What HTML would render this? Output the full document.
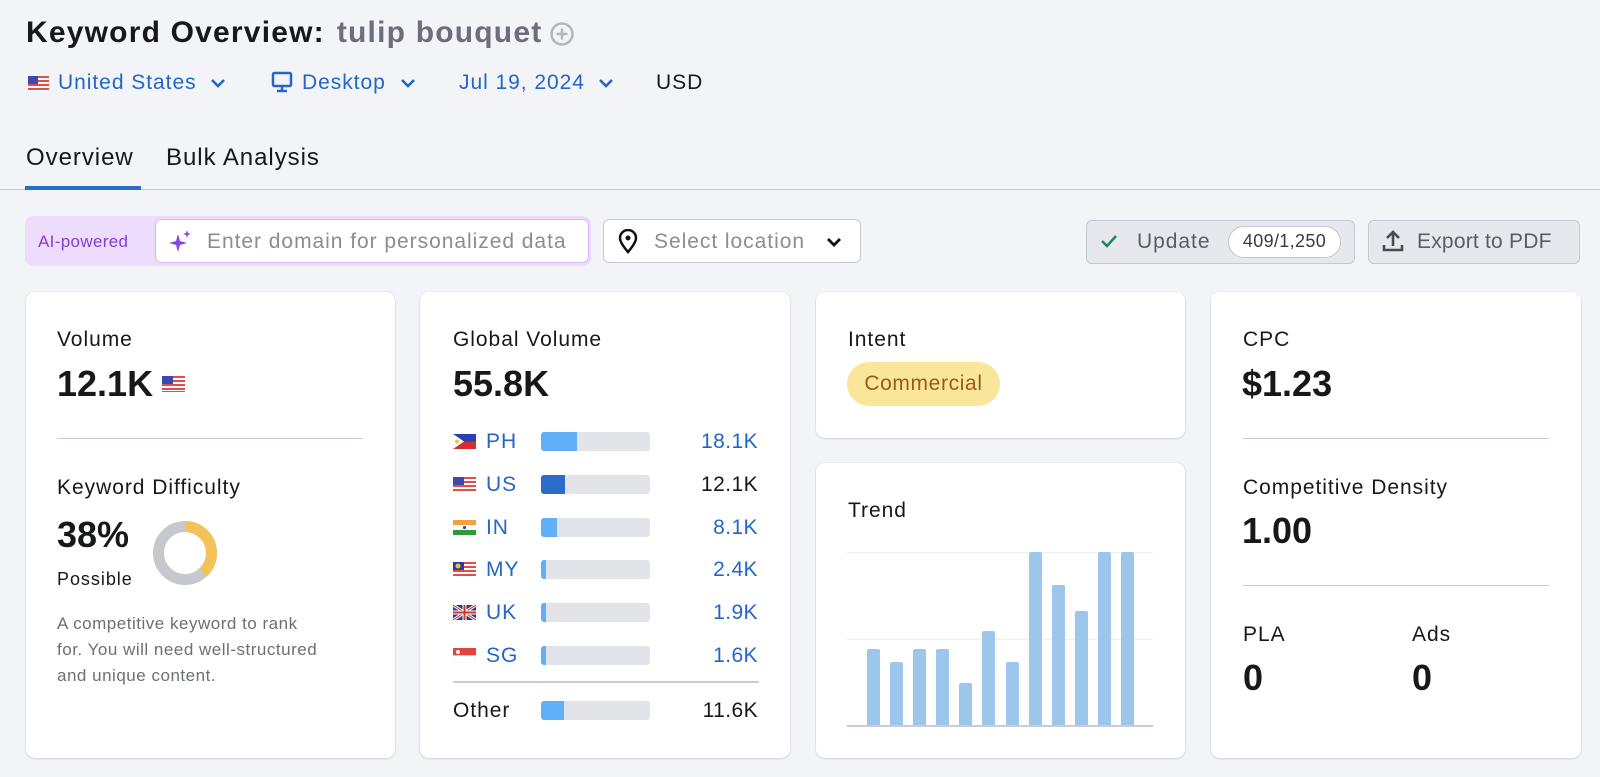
<!DOCTYPE html>
<html><head><meta charset="utf-8">
<style>
*{margin:0;padding:0;box-sizing:border-box}
body{width:1600px;height:777px;background:#f3f4f8;font-family:"Liberation Sans",sans-serif;color:#17181c;position:relative;overflow:hidden;letter-spacing:0.06em}
.a{position:absolute;white-space:nowrap}
.card{position:absolute;background:#fff;border-radius:9px;box-shadow:0 1px 2px rgba(0,0,0,.12),0 0 0 1px rgba(0,0,0,.03)}
.lbl{font-size:21px;color:#17181c}
.val{font-size:36px;font-weight:bold;color:#17181c;letter-spacing:0}
.blue{color:#2465c8}
.hr{position:absolute;height:1px;background:#c9ccd6}
.bar{position:absolute;height:19px;background:#e2e4ea;border-radius:3px;overflow:hidden;width:109px;left:541px}
.bar i{position:absolute;left:0;top:0;bottom:0;background:#5fb0f7}
.tb{position:absolute;width:12.5px;background:#9dc6ec;border-radius:2px 2px 0 0}
.num{letter-spacing:0.02em}
</style></head><body>

<div class="a" style="left:26px;top:16px;font-size:30px;font-weight:bold;letter-spacing:1.2px">Keyword Overview:<span style="color:#6c6e79;margin-left:12px">tulip bouquet</span></div>
<svg class="a" style="left:549px;top:21px" width="26" height="26" viewBox="0 0 26 26"><circle cx="13" cy="13" r="10.5" fill="none" stroke="#b4b6bf" stroke-width="2.5"/><path d="M13 7.5v11M7.5 13h11" stroke="#b4b6bf" stroke-width="2.5"/></svg>

<svg class="a" style="left:28px;top:76px" width="21" height="15"><rect width="21" height="15" fill="#fff"/><g fill="#e44b4b"><rect y="0" width="21" height="2"/><rect y="4" width="21" height="2"/><rect y="8" width="21" height="2"/><rect y="12" width="21" height="2"/></g><rect width="10" height="8" fill="#3c4ab0"/></svg>
<div class="a blue" style="left:58px;top:71px;font-size:21px">United States</div>
<svg class="a" style="left:210px;top:78px" width="16" height="10"><path d="M2 2l6 6 6-6" fill="none" stroke="#2465c8" stroke-width="2.6"/></svg>
<svg class="a" style="left:271px;top:71px" width="22" height="22" viewBox="0 0 22 22"><rect x="2" y="2" width="18" height="13" rx="1.5" fill="none" stroke="#2465c8" stroke-width="2.5"/><path d="M11 15v4M6 20h10" stroke="#2465c8" stroke-width="2.5"/></svg>
<div class="a blue" style="left:302px;top:71px;font-size:21px">Desktop</div>
<svg class="a" style="left:400px;top:78px" width="16" height="10"><path d="M2 2l6 6 6-6" fill="none" stroke="#2465c8" stroke-width="2.6"/></svg>
<div class="a blue" style="left:459px;top:71px;font-size:21px">Jul 19, 2024</div>
<svg class="a" style="left:598px;top:78px" width="16" height="10"><path d="M2 2l6 6 6-6" fill="none" stroke="#2465c8" stroke-width="2.6"/></svg>
<div class="a" style="left:656px;top:71px;font-size:21px">USD</div>

<div class="a" style="left:26px;top:144px;font-size:24px">Overview</div>
<div class="a" style="left:166px;top:144px;font-size:24px">Bulk Analysis</div>
<div class="hr" style="left:0;width:1600px;top:189px;background:#c4c7d0"></div>
<div class="a" style="left:25px;top:186px;width:116px;height:4px;background:#2b6bc9"></div>

<div class="a" style="left:25px;top:216px;width:566px;height:50px;background:#eedcfc;border-radius:8px"></div>
<div class="a" style="left:38px;top:232px;font-size:17px;color:#8140d4;letter-spacing:0.02em">AI-powered</div>
<div class="a" style="left:155px;top:219px;width:434px;height:44px;background:#fff;border:1.5px solid #d8b7f7;border-radius:6px"></div>
<svg class="a" style="left:168px;top:228px" width="26" height="26" viewBox="0 0 26 26"><path d="M10 6l2 7 7 2-7 2-2 7-2-7-7-2 7-2z" fill="#8b44e0"/><path d="M19 2l1 3 3 1-3 1-1 3-1-3-3-1 3-1z" fill="#8b44e0"/></svg>
<div class="a" style="left:207px;top:230px;font-size:21px;color:#8a8c96">Enter domain for personalized data</div>

<div class="a" style="left:603px;top:219px;width:258px;height:44px;background:#fff;border:1.5px solid #c5c8d0;border-radius:6px"></div>
<svg class="a" style="left:618px;top:229px" width="20" height="25" viewBox="0 0 20 25"><path d="M10 23C4 16 2 12 2 9a8 8 0 0116 0c0 3-2 7-8 14z" fill="none" stroke="#111" stroke-width="2.5"/><circle cx="10" cy="9" r="2.5" fill="#111"/></svg>
<div class="a" style="left:654px;top:230px;font-size:21px;color:#8a8c96">Select location</div>
<svg class="a" style="left:826px;top:237px" width="16" height="10"><path d="M2 2l6 6 6-6" fill="none" stroke="#111" stroke-width="2.8"/></svg>

<div class="a" style="left:1086px;top:220px;width:269px;height:44px;background:#e6e8ee;border:1.5px solid #c5c8d0;border-radius:6px"></div>
<svg class="a" style="left:1100px;top:234px" width="18" height="14"><path d="M2 7l5 5 9-10" fill="none" stroke="#1e8a5c" stroke-width="2.6"/></svg>
<div class="a" style="left:1137px;top:230px;font-size:21px;color:#5a5c66">Update</div>
<div class="a num" style="left:1228px;top:226px;width:113px;height:32px;background:#fff;border:1.5px solid #c5c8d0;border-radius:16px;font-size:18px;color:#3a3c44;text-align:center;line-height:29px">409/1,250</div>
<div class="a" style="left:1368px;top:220px;width:212px;height:44px;background:#e6e8ee;border:1.5px solid #c5c8d0;border-radius:6px"></div>
<svg class="a" style="left:1382px;top:229px" width="22" height="24" viewBox="0 0 22 24"><path d="M11 17V4M5 9l6-6 6 6M2 16v5h18v-5" fill="none" stroke="#4a4c55" stroke-width="2.6"/></svg>
<div class="a" style="left:1417px;top:230px;font-size:21px;color:#5a5c66;letter-spacing:0.01em">Export to PDF</div>

<div class="card" style="left:26px;top:292px;width:369px;height:466px"></div>
<div class="a lbl" style="left:57px;top:328px">Volume</div>
<div class="a val" style="left:57px;top:363px">12.1K</div>
<svg class="a" style="left:162px;top:376px" width="23" height="16"><rect width="23" height="16" fill="#fff"/><g fill="#e44b4b"><rect y="0" width="23" height="2"/><rect y="4" width="23" height="2"/><rect y="8" width="23" height="2"/><rect y="12" width="23" height="2"/><rect y="15" width="23" height="1"/></g><rect width="11" height="8" fill="#3c4ab0"/></svg>
<div class="hr" style="left:57px;width:306px;top:438px"></div>
<div class="a lbl" style="left:57px;top:476px">Keyword Difficulty</div>
<div class="a val" style="left:57px;top:514px">38%</div>
<div class="a" style="left:57px;top:569px;font-size:18px">Possible</div>
<svg class="a" style="left:151px;top:519px" width="68" height="68" viewBox="0 0 68 68"><circle cx="34" cy="34" r="26.5" fill="none" stroke="#c6c8ce" stroke-width="11"/><circle cx="34" cy="34" r="26.5" fill="none" stroke="#f3c259" stroke-width="11" stroke-dasharray="63.3 200" transform="rotate(-90 34 34)"/></svg>
<div class="a" style="left:57px;top:611px;font-size:17px;color:#6c6e79;line-height:26px;letter-spacing:0.03em">A competitive keyword to rank<br>for. You will need well-structured<br>and unique content.</div>

<div class="card" style="left:420px;top:292px;width:370px;height:466px"></div>
<div class="a lbl" style="left:453px;top:328px">Global Volume</div>
<div class="a val" style="left:453px;top:363px">55.8K</div>

<svg class="a" style="left:453px;top:434px" width="23" height="15"><rect width="23" height="7.5" fill="#2b3fb0"/><rect y="7.5" width="23" height="7.5" fill="#d22f2f"/><path d="M0 0L11 7.5 0 15z" fill="#fff"/><circle cx="4" cy="7.5" r="2" fill="#f0c330"/></svg>
<div class="a blue" style="left:486px;top:430px;font-size:21px">PH</div>
<div class="bar" style="top:432px"><i style="width:36px"></i></div>
<div class="a blue num" style="right:842px;top:430px;font-size:21px">18.1K</div>

<svg class="a" style="left:453px;top:477px" width="23" height="15"><rect width="23" height="15" fill="#fff"/><g fill="#e44b4b"><rect y="0" width="23" height="2"/><rect y="4" width="23" height="2"/><rect y="8" width="23" height="2"/><rect y="12" width="23" height="2"/></g><rect width="11" height="8" fill="#3c4ab0"/></svg>
<div class="a blue" style="left:486px;top:473px;font-size:21px">US</div>
<div class="bar" style="top:475px"><i style="width:24px;background:#2b6bc9"></i></div>
<div class="a num" style="right:842px;top:473px;font-size:21px">12.1K</div>

<svg class="a" style="left:453px;top:520px" width="23" height="15"><rect width="23" height="5" fill="#f3a03e"/><rect y="5" width="23" height="5" fill="#fff"/><rect y="10" width="23" height="5" fill="#2f9a3a"/><circle cx="11.5" cy="7.5" r="1.6" fill="#3b4aa8"/></svg>
<div class="a blue" style="left:486px;top:516px;font-size:21px">IN</div>
<div class="bar" style="top:518px"><i style="width:16px"></i></div>
<div class="a blue num" style="right:842px;top:516px;font-size:21px">8.1K</div>

<svg class="a" style="left:453px;top:562px" width="23" height="15"><rect width="23" height="15" fill="#fff"/><g fill="#e44b4b"><rect y="0" width="23" height="2"/><rect y="4" width="23" height="2"/><rect y="8" width="23" height="2"/><rect y="12" width="23" height="2"/></g><rect width="11" height="8" fill="#2f3c9c"/><circle cx="5" cy="4" r="2.5" fill="#f0c330"/></svg>
<div class="a blue" style="left:486px;top:558px;font-size:21px">MY</div>
<div class="bar" style="top:560px"><i style="width:5px"></i></div>
<div class="a blue num" style="right:842px;top:558px;font-size:21px">2.4K</div>

<svg class="a" style="left:453px;top:605px" width="23" height="15"><rect width="23" height="15" fill="#2a3b8f"/><path d="M0 0L23 15M23 0L0 15" stroke="#fff" stroke-width="3"/><path d="M0 0L23 15M23 0L0 15" stroke="#d22f2f" stroke-width="1"/><path d="M11.5 0v15M0 7.5h23" stroke="#fff" stroke-width="4"/><path d="M11.5 0v15M0 7.5h23" stroke="#d22f2f" stroke-width="2"/></svg>
<div class="a blue" style="left:486px;top:601px;font-size:21px">UK</div>
<div class="bar" style="top:603px"><i style="width:5px"></i></div>
<div class="a blue num" style="right:842px;top:601px;font-size:21px">1.9K</div>

<svg class="a" style="left:453px;top:648px" width="23" height="15"><rect width="23" height="7.5" fill="#e0453f"/><rect y="7.5" width="23" height="7.5" fill="#fff" stroke="#e6e6e6" stroke-width=".5"/><circle cx="5" cy="4" r="2" fill="#fff"/></svg>
<div class="a blue" style="left:486px;top:644px;font-size:21px">SG</div>
<div class="bar" style="top:646px"><i style="width:5px"></i></div>
<div class="a blue num" style="right:842px;top:644px;font-size:21px">1.6K</div>

<div class="hr" style="left:453px;width:306px;top:681px;height:2px;background:#c9ccd6"></div>
<div class="a" style="left:453px;top:699px;font-size:21px">Other</div>
<div class="bar" style="top:701px"><i style="width:23px"></i></div>
<div class="a num" style="right:842px;top:699px;font-size:21px">11.6K</div>

<div class="card" style="left:816px;top:292px;width:369px;height:146px"></div>
<div class="a lbl" style="left:848px;top:328px">Intent</div>
<div class="a" style="left:847px;top:362px;width:153px;height:44px;border-radius:22px;background:#f9e69b;color:#9a5a1a;font-size:21px;text-align:center;line-height:44px;letter-spacing:0.03em">Commercial</div>

<div class="card" style="left:816px;top:463px;width:369px;height:295px"></div>
<div class="a lbl" style="left:848px;top:499px">Trend</div>
<div class="hr" style="left:847px;width:306px;top:552px;background:#eceef2"></div>
<div class="hr" style="left:847px;width:306px;top:639px;background:#eceef2"></div>
<div class="tb" style="left:867px;top:649px;height:76px"></div>
<div class="tb" style="left:890px;top:662px;height:63px"></div>
<div class="tb" style="left:913px;top:649px;height:76px"></div>
<div class="tb" style="left:936px;top:649px;height:76px"></div>
<div class="tb" style="left:959px;top:683px;height:42px"></div>
<div class="tb" style="left:982px;top:631px;height:94px"></div>
<div class="tb" style="left:1006px;top:662px;height:63px"></div>
<div class="tb" style="left:1029px;top:552px;height:173px"></div>
<div class="tb" style="left:1052px;top:585px;height:140px"></div>
<div class="tb" style="left:1075px;top:611px;height:114px"></div>
<div class="tb" style="left:1098px;top:552px;height:173px"></div>
<div class="tb" style="left:1121px;top:552px;height:173px"></div>
<div class="hr" style="left:847px;width:306px;top:725px;height:2px;background:#c9ccd6"></div>

<div class="card" style="left:1211px;top:292px;width:370px;height:466px"></div>
<div class="a lbl" style="left:1243px;top:328px">CPC</div>
<div class="a val" style="left:1242px;top:363px">$1.23</div>
<div class="hr" style="left:1243px;width:306px;top:438px"></div>
<div class="a lbl" style="left:1243px;top:476px">Competitive Density</div>
<div class="a val" style="left:1242px;top:510px">1.00</div>
<div class="hr" style="left:1243px;width:306px;top:585px"></div>
<div class="a lbl" style="left:1243px;top:623px">PLA</div>
<div class="a val" style="left:1243px;top:657px">0</div>
<div class="a lbl" style="left:1412px;top:623px">Ads</div>
<div class="a val" style="left:1412px;top:657px">0</div>

</body></html>
